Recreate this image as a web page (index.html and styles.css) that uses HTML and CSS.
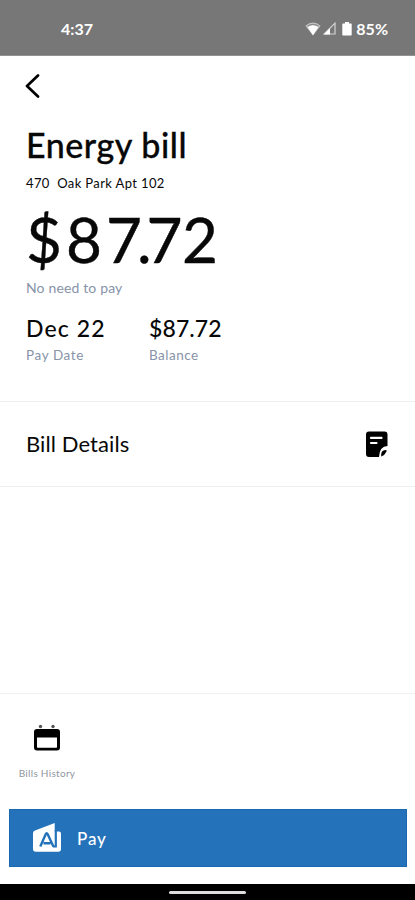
FILE: index.html
```html
<!DOCTYPE html>
<html lang="en">
<head>
<meta charset="utf-8">
<meta name="viewport" content="width=device-width, initial-scale=1">
<title>Energy bill</title>
<link rel="stylesheet" href="styles.css">
</head>
<body>
<div class="screen">
  <header class="status">
    <span class="time">4:37</span>
    <div class="indicators">
      <svg class="wifi" width="16" height="14" viewBox="0 0 16 14"><path d="M.4 3.800Q8-2.800 15.600 3.800L8 13.600Z" fill="#c4c4c4"/><path d="M2 3.800Q8-.2 14 3.800L13 5Q8 1.500 3 5Z" fill="#8c8c8c"/><path d="M2.600 5Q8 1.400 13.400 5L8 13.200Z" fill="#fff"/></svg>
      <svg class="signal" width="13" height="13" viewBox="0 0 13 13"><path d="M12 1.200V12H1.200Z" fill="none" stroke="#d4d4d4" stroke-width="1.200"/><path d="M.8 12.400 7 6.200v6.200Z" fill="#fff"/></svg>
      <svg class="battery" width="10" height="14" viewBox="0 0 10 14"><path d="M3 0h4v1.500h2q.7 0 .7.700v10.600q0 .8-.7.800H1q-.7 0-.7-.8V2.200q0-.7.700-.7h2Z" fill="#fff"/></svg>
      <span class="percent">85%</span>
    </div>
  </header>
  <main class="content">
    <button class="back" aria-label="Back"><svg width="15" height="24" viewBox="0 0 15 24"><path d="M13 1.500 2 12l11 10.500" fill="none" stroke="#000" stroke-width="2.700" stroke-linecap="round" stroke-linejoin="round"/></svg></button>
    <section class="summary">
      <h1 class="title">Energy bill</h1>
      <p class="address">470 &nbsp;Oak Park Apt 102</p>
      <p class="amount"><span class="wide">$8</span><span class="tight">7.</span><span class="end">72</span></p>
      <p class="note">No need to pay</p>
      <dl class="facts">
        <div class="fact"><dd class="value date">Dec 22</dd><dt class="label paydate">Pay Date</dt></div>
        <div class="fact"><dd class="value sum">$87.72</dd><dt class="label balance">Balance</dt></div>
      </dl>
    </section>
    <section class="details">
      <h2 class="details-title">Bill Details</h2>
      <svg width="24" height="27" viewBox="0 0 24 27"><path d="M4 .5h15.500q3 0 3 3V15q-8 .2-8.500 11H4q-3 0-3-3V3.500q0-3 3-3Z"/><path d="M6 6.900h10.500M6 12h5.500" stroke="#fff" stroke-width="2.200" stroke-linecap="round"/><path d="M16.200 25.500v-2.200q0-4.300 5.300-4.300v1.500q-1.400 3.500-5.300 5Z"/></svg>
    </section>
  </main>
  <footer class="footer">
    <div class="history">
      <svg width="28" height="28" viewBox="0 0 28 28"><circle cx="7.500" cy="2.500" r="1.700" fill="#555"/><circle cx="20" cy="2.500" r="1.700" fill="#555"/><path fill-rule="evenodd" d="M4 5h20q3 0 3 3v15.500q0 3-3 3H4q-3 0-3-3V8q0-3 3-3Zm0 8.500v9.500q0 .7.700.7h18.600q.7 0 .7-.7v-9.500Z"/></svg>
      <span class="history-label">Bills History</span>
    </div>
    <button class="pay">
      <svg width="30" height="30" viewBox="0 0 30 30"><path d="M1 10.300Q1 8.300 3 7.500L22.700 0V8.500H27q2 0 2 2V26q0 2.800-2.800 2.800H4Q1 28.800 1 26Z" fill="#fff"/><path d="m8.300 23.500 5.500-12.500q.9-1.800 1.800 0l5.800 12.500M11.500 20.300h7" fill="none" stroke="#2473ba" stroke-width="2.400"/><path d="M23.800 7v16.500h-3" fill="none" stroke="#2473ba" stroke-width="2.200"/></svg>
      <span class="pay-label">Pay</span>
    </button>
  </footer>
  <div class="system-nav"><div class="handle"></div></div>
</div>
</body>
</html>
```
FILE: styles.css
```css
* { box-sizing: border-box; margin: 0; padding: 0; }
body { background: #fff; color: #080808; font-family: Lato, "Open Sans", sans-serif; }
button { border: 0; font: inherit; background: none; }
svg { display: block; flex: none; }
.screen { width: 415px; height: 900px; display: flex; flex-direction: column; }
.status { height: 56px; flex: none; background: #777; color: #fff; display: flex; justify-content: space-between; align-items: center; padding: 2px 27px 0 61px; border-bottom: 1px solid #929292; font-weight: 700; font-size: 16px; }
.indicators { display: flex; align-items: center; }
.signal { margin-left: 2px; }
.battery { margin: 0 4px 0 6px; }
.content { flex: 1; }
.back { display: block; margin: 18px 0 0 25px; }
.summary { height: 303px; padding-left: 26px; padding-top: 26px; }
.title { font-size: 34px; font-weight: 500; line-height: 42px; letter-spacing: .55px; white-space: nowrap; -webkit-text-stroke: .3px #080808; }
.address { font-size: 13px; line-height: 18px; letter-spacing: .38px; margin-top: 8px; white-space: nowrap; }
.amount { font-size: 62px; line-height: 70px; margin-top: 12px; white-space: nowrap; -webkit-text-stroke: .4px #080808; }
.wide { letter-spacing: 4px; }
.tight { letter-spacing: -5px; }
.end { letter-spacing: -.5px; }
.note { font-size: 14px; line-height: 18px; letter-spacing: .15px; margin-top: 5px; color: #8793a8; }
.facts { display: flex; margin-top: 17px; }
.fact { width: 123px; }
.value { font-size: 23px; font-weight: 500; line-height: 28px; }
.date { letter-spacing: 1.1px; }
.sum { letter-spacing: .1px; }
.label { font-size: 13.500px; line-height: 18px; margin-top: 4px; color: #8793a8; }
.paydate { letter-spacing: .6px; }
.balance { letter-spacing: .5px; }
.details { height: 86px; border-top: 1px solid #eceef0; border-bottom: 1px solid #eceef0; display: flex; align-items: center; justify-content: space-between; padding: 0 26px; }
.details-title { font-size: 22px; font-weight: 400; letter-spacing: .1px; padding-bottom: 2px; }
.footer { height: 191px; flex: none; border-top: 1px solid #f0f1f2; padding: 30px 8px 17px 9px; display: flex; flex-direction: column; justify-content: space-between; }
.history { width: 76px; display: flex; flex-direction: column; align-items: center; }
.history-label { font-size: 10px; line-height: 14px; letter-spacing: .3px; color: #8f96a0; margin-top: 14px; white-space: nowrap; }
.pay { width: 398px; height: 58px; background: #2473ba; border: 1px solid #1869b2; display: flex; align-items: center; padding-left: 22px; color: #fff; }
.pay-label { font-size: 17px; letter-spacing: .9px; margin-left: 15px; font-weight: 500; }
.system-nav { height: 16px; flex: none; background: #000; display: flex; justify-content: center; padding-top: 7px; }
.handle { width: 77px; height: 3px; border-radius: 2px; background: #ddd; }
```
